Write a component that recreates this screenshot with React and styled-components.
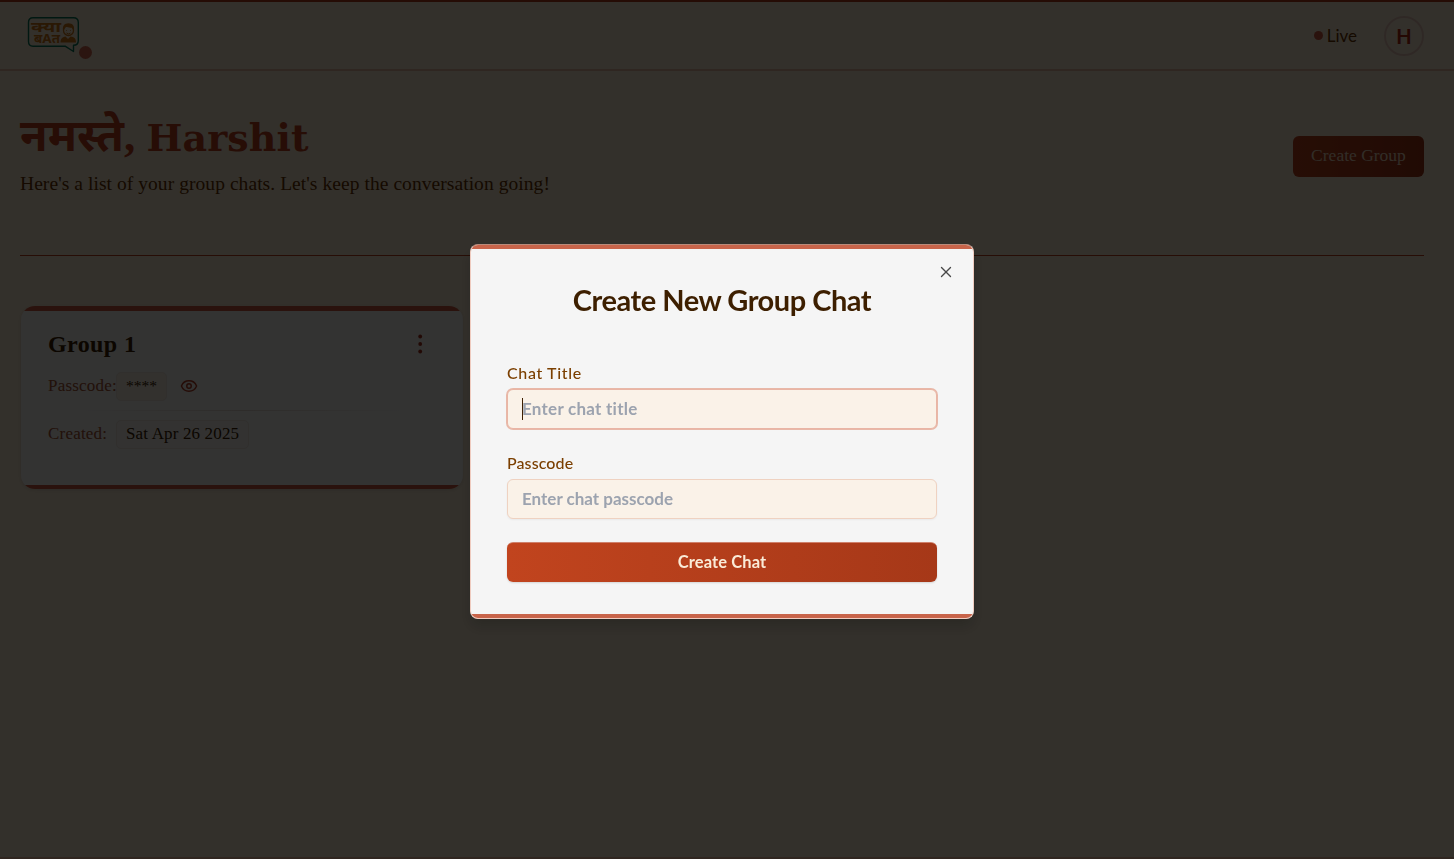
import React from "react";
import styled, { createGlobalStyle, css } from "styled-components";
import { Eye, X } from "lucide-react";

const serif = `"Liberation Serif", "Noto Sans", serif`;
const casual = `Lato, "Open Sans", sans-serif`;

const GlobalStyle = createGlobalStyle`
  *, *::before, *::after { box-sizing: border-box; }
  body { margin: 0; background: #fff0d6; overflow: hidden; }
  button, input { font: inherit; }
  h1, h2, h3, p { margin: 0; }
`;

const Page = styled.div`
  height: 859px;
  display: flex;
  flex-direction: column;
  background: #fff0d7;
  border-top: 2px solid #b93f1c;
  border-bottom: 2px solid #f0bca2;
  font-family: ${serif};
`;

const Header = styled.header`
  height: 69px;
  flex: none;
  display: flex;
  align-items: center;
  justify-content: space-between;
  padding: 0 30px 0 27px;
  border-bottom: 2px solid #e8bda3;
`;

const Brand = styled.div`
  display: flex;
  align-items: flex-end;
  height: 43px;
  align-self: flex-start;
  margin-top: 14px;
`;

const LogoWrap = styled.div`
  height: 43px;
`;

const BrandDot = styled.span`
  width: 13px;
  height: 13px;
  border-radius: 50%;
  background: #d66b50;
`;

const HeaderTools = styled.div`
  display: flex;
  align-items: center;
  gap: 27px;
  height: 67px;
  align-self: flex-start;
  font-family: ${casual};
`;

const Status = styled.div`
  display: flex;
  align-items: center;
  gap: 4px;
  color: #6b3500;
  font-size: 17px;
  line-height: 20px;
`;

const StatusDot = styled.span`
  width: 9px;
  height: 9px;
  border-radius: 50%;
  background: #cf5d42;
`;

const Avatar = styled.div`
  width: 40px;
  height: 40px;
  display: grid;
  place-items: center;
  border: 2px solid #ecc9bb;
  border-radius: 50%;
  color: #b52a10;
  font-size: 20px;
  font-weight: 700;
`;

const Main = styled.main`
  display: flex;
  flex-direction: column;
  padding: 34px 30px 0 20px;
`;

const Hero = styled.section`
  height: 151px;
  display: flex;
  justify-content: space-between;
  border-bottom: 1px solid #c1441e;
`;

const Greeting = styled.h1`
  height: 66px;
  display: flex;
  align-items: baseline;
  color: #c1441e;
  font-size: 45px;
  line-height: 63px;
  white-space: pre;
`;

const Name = styled.span`
  font-family: "DejaVu Serif", serif;
  font-size: 38px;
  letter-spacing: 0.1px;
`;

const Subtitle = styled.p`
  color: #6b3500;
  font-size: 19.5px;
  line-height: 26px;
  letter-spacing: 0.06px;
  white-space: nowrap;
`;

const CreateGroup = styled.button`
  width: 131px;
  height: 41px;
  margin-top: 31px;
  padding: 0 0 2px;
  border: 0;
  border-radius: 6px;
  background: linear-gradient(90deg, #c1441e, #a33617);
  color: #f5dfc4;
  font-family: ${serif};
  font-size: 17.5px;
`;

const Card = styled.article`
  width: 442px;
  height: 183px;
  margin: 50px 0 0 1px;
  padding: 21px 38px 0 27px;
  display: flex;
  flex-direction: column;
  border-radius: 14px;
  background: linear-gradient(#cf5d42 0 5px, #fcfcf9 5px 179px, #cf5d42 179px);
  box-shadow: 0 1px 4px #0002;
`;

const CardHead = styled.div`
  height: 34px;
  display: flex;
  justify-content: space-between;
  align-items: center;
`;

const CardTitle = styled.h3`
  color: #3d1f00;
  font-size: 24px;
  line-height: 34px;
  letter-spacing: 0.4px;
`;

const InfoRow = styled.div`
  display: flex;
  align-items: center;
  height: 29px;
  margin-top: ${(p) => p.$gap}px;
  font-size: 17px;
`;

const InfoLabel = styled.span`
  width: 68px;
  padding-bottom: 2px;
  color: #a85432;
  letter-spacing: 0.2px;
  white-space: nowrap;
`;

const Chip = styled.span`
  width: ${(p) => p.$width}px;
  height: 29px;
  padding-left: 9px;
  border: 1px solid #f4e9df;
  border-radius: 5px;
  background: ${(p) => (p.$warm ? "#fdf3e5" : "#fcfaf6")};
  color: #3d1f00;
  font-size: ${(p) => (p.$warm ? 15.5 : 17)}px;
  line-height: 26px;
  letter-spacing: ${(p) => (p.$warm ? 0 : 0.15)}px;
  white-space: nowrap;
`;

const CardRule = styled.div`
  width: 315px;
  height: 1px;
  margin: 9px 0 0 37px;
  background: linear-gradient(90deg, transparent, #e6dbd2, transparent);
`;

const EyeIcon = styled(Eye)`
  margin: 0 0 1px 13px;
  color: #b93f25;
`;

const Overlay = styled.div`
  position: fixed;
  inset: 0;
  display: flex;
  align-items: flex-start;
  padding: 244px 0 0 470px;
  background: rgba(0, 0, 0, 0.8);
`;

const Dialog = styled.div`
  position: relative;
  width: 504px;
  height: 375px;
  padding: 36px 36px 0;
  display: flex;
  flex-direction: column;
  overflow: hidden;
  border: 1px solid #efcbbf;
  border-top-color: #b98a7a;
  border-radius: 8px;
  background: #f5f5f5;
  box-shadow: 0 8px 14px rgba(0, 0, 0, 0.18);
  font-family: ${casual};
  font-variant-ligatures: none;
`;

const Edge = styled.span`
  position: absolute;
  left: 0;
  right: 0;
  height: 4px;
  background: #c8644a;
  ${(p) => (p.$bottom ? css`bottom: 0;` : css`top: 0;`)}
`;

const Close = styled.button`
  position: absolute;
  top: 18px;
  right: 18px;
  width: 18px;
  height: 18px;
  padding: 0;
  border: 0;
  background: none;
  color: #484848;
  svg { display: block; }
`;

const DialogTitle = styled.h2`
  height: 41px;
  color: #3d1f00;
  font-size: 29px;
  line-height: 38px;
  letter-spacing: -0.47px;
  text-align: center;
  white-space: nowrap;
`;

const Form = styled.form`
  display: flex;
  flex-direction: column;
  padding-top: 39px;
`;

const Label = styled.label`
  height: 24px;
  color: #7b3f00;
  font-size: 16px;
  font-weight: 500;
  line-height: 24px;
  letter-spacing: ${(p) => p.$spacing}px;
`;

const Input = styled.input`
  width: 430px;
  height: 40px;
  margin-top: 4px;
  padding: 0 14px 1px;
  border: 1px solid #efd2c1;
  border-radius: 6px;
  outline: 0;
  background: #faf2e8;
  box-shadow: 0 1px 2px #0000000d;
  color: #3d1f00;
  font-size: 17px;
  font-weight: 700;
  letter-spacing: ${(p) => p.$spacing}px;
  &::placeholder { color: #9ca3af; opacity: 1; }
  ${(p) => p.$active && css`
    border-color: #e9b5a5;
    box-shadow: 0 0 0 1px #e8b8a8;
  `}
`;

const Field = styled.div`
  position: relative;
  height: 90px;
  display: flex;
  flex-direction: column;
`;

const Caret = styled.span`
  position: absolute;
  left: 15px;
  top: 37px;
  width: 1px;
  height: 22px;
  background: #3d1f00;
`;

const Submit = styled.button`
  width: 430px;
  height: 40px;
  margin-top: 1px;
  padding: 0 0 1px;
  border: 0;
  border-top: 1px solid #cf806b;
  border-radius: 6px;
  background: linear-gradient(90deg, #c1441e, #a63818);
  box-shadow: 0 1px 2px #0002;
  color: #faebd7;
  font-size: 16.5px;
  font-weight: 700;
  letter-spacing: 0.1px;
`;

const Logo = () => (
  <svg width="52" height="38" viewBox="0 0 52 38">
    <path
      d="M6 1.7H46.5Q51.3 1.7 51.3 6.5V24.5Q51.3 29.3 46.5 29.3V35.5L38.5 30.3H6Q1.5 30.3 1.5 25.5V6.5Q1.5 1.7 6 1.7Z"
      fill="none" stroke="#087a5b" strokeWidth="1.4" strokeLinejoin="round"
    />
    <g fill="#d17818" fontFamily="Noto Sans, sans-serif" fontWeight="700">
      <text x="4" y="15.5" fontSize="15" textLength="30" lengthAdjust="spacingAndGlyphs">क्या</text>
      <text x="7" y="27" fontSize="12.5" textLength="26" lengthAdjust="spacingAndGlyphs">बAत</text>
    </g>
    <path d="M33.5 26.5C33.5 22 36 21 38.5 20.5L41 23L43.5 20.5C47 21 49 22 49 26.5Z" fill="#d17818" />
    <circle cx="41.5" cy="14.5" r="5" fill="none" stroke="#d17818" strokeWidth="1.3" />
    <path d="M36.1 15C35 10 37.5 7.3 41.5 7.3S48 10 46.9 15L45 11.5C41.5 12.5 39.5 10 38 11.5Z" fill="#d17818" />
    <path d="M39.5 17Q41.5 18.8 43.5 17M39.5 14.2V14.9M43.5 14.2V14.9" fill="none" stroke="#d17818" />
  </svg>
);

const MoreIcon = () => (
  <svg width="10" height="22" viewBox="0 0 10 22" fill="#a92f19">
    <circle cx="5.2" cy="3.5" r="1.9" />
    <circle cx="5.2" cy="11" r="1.9" />
    <circle cx="5.2" cy="18.5" r="1.9" />
  </svg>
);

export default function App() {
  return (
    <>
      <GlobalStyle />
      <Page>
        <Header>
          <Brand><LogoWrap><Logo /></LogoWrap><BrandDot /></Brand>
          <HeaderTools>
            <Status><StatusDot />Live</Status>
            <Avatar>H</Avatar>
          </HeaderTools>
        </Header>
        <Main>
          <Hero>
            <div>
              <Greeting>नमस्ते, <Name>Harshit</Name></Greeting>
              <Subtitle>Here's a list of your group chats. Let's keep the conversation going!</Subtitle>
            </div>
            <CreateGroup>Create Group</CreateGroup>
          </Hero>
          <Card>
            <CardHead><CardTitle>Group 1</CardTitle><MoreIcon /></CardHead>
            <InfoRow $gap={11}>
              <InfoLabel>Passcode:</InfoLabel>
              <Chip $width={51} $warm>****</Chip>
              <EyeIcon size={18} />
            </InfoRow>
            <CardRule />
            <InfoRow $gap={9}>
              <InfoLabel>Created:</InfoLabel>
              <Chip $width={133}>Sat Apr 26 2025</Chip>
            </InfoRow>
          </Card>
        </Main>
      </Page>
      <Overlay>
        <Dialog role="dialog">
          <Edge />
          <Close aria-label="Close"><X size={18} strokeWidth={1.8} /></Close>
          <DialogTitle>Create New Group Chat</DialogTitle>
          <Form>
            <Field>
              <Label $spacing={0.65}>Chat Title</Label>
              <Input $active $spacing={0.25} placeholder="Enter chat title" />
              <Caret />
            </Field>
            <Field>
              <Label $spacing={0.1}>Passcode</Label>
              <Input $spacing={0} placeholder="Enter chat passcode" />
            </Field>
            <Submit type="button">Create Chat</Submit>
          </Form>
          <Edge $bottom />
        </Dialog>
      </Overlay>
    </>
  );
}
